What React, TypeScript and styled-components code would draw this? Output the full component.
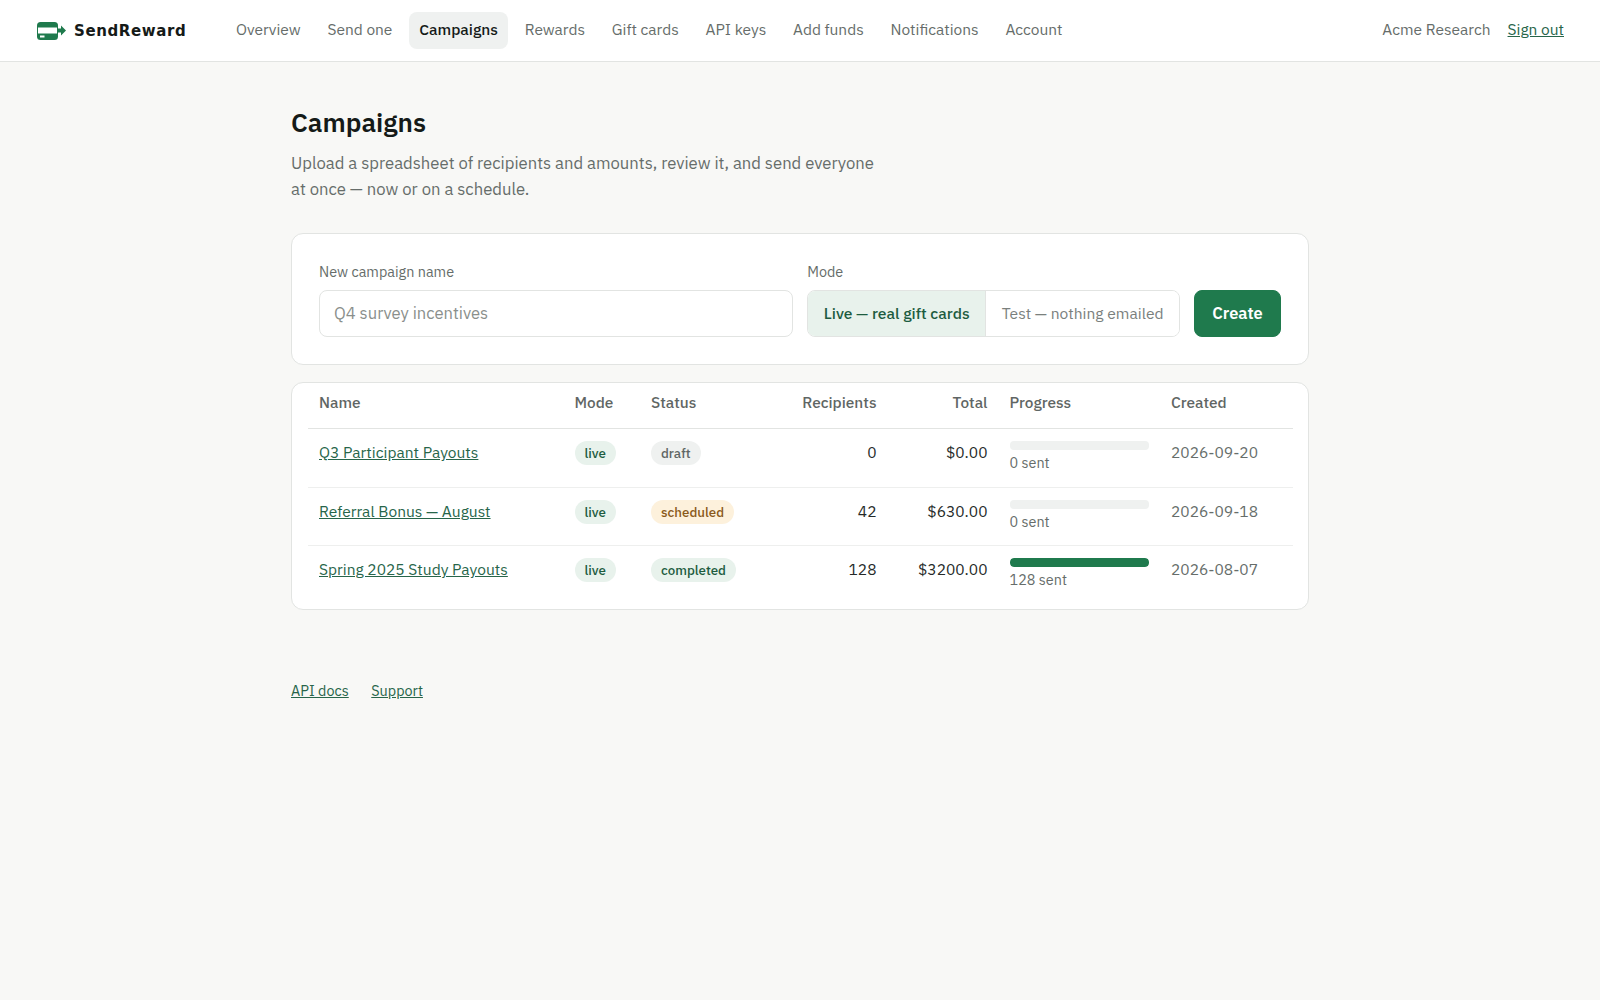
import styled, { createGlobalStyle } from 'styled-components'

const sans = `'IBM Plex Sans', 'Noto Sans', Roboto, sans-serif`

const GlobalStyle = createGlobalStyle`
  * {
    box-sizing: border-box;
  }
  html,
  body {
    margin: 0;
    min-height: 100%;
    background: #f8f8f6;
    color: #151a18;
    font-family: ${sans};
    font-size: 15.5px;
  }
`

const Header = styled.header`
  display: flex;
  align-items: center;
  height: 62px;
  padding: 0 36px;
  background: #ffffff;
  border-bottom: 1px solid #e2e4e2;
`

const Brand = styled.a`
  display: flex;
  align-items: center;
  gap: 8px;
  width: 189.5px;
  color: #151a18;
  font-family: 'DejaVu Sans', sans-serif;
  font-size: 15px;
  font-weight: 700;
  letter-spacing: 0.6px;
`

const NavList = styled.nav`
  display: flex;
  align-items: center;
  gap: 5.75px;
`

const NavItem = styled.a<{ $active?: boolean }>`
  padding: 8px 10.5px 11px;
  border-radius: 8px;
  line-height: 18px;
  font-size: 15.5px;
  font-weight: ${p => (p.$active ? 500 : 400)};
  color: ${p => (p.$active ? '#151a18' : '#666d6a')};
  background: ${p => (p.$active ? '#eff1f0' : 'transparent')};
`

const HeaderRight = styled.div`
  display: flex;
  align-items: center;
  gap: 17px;
  margin-left: auto;
  padding-bottom: 3px;
  color: #666d6a;
`

const GreenLink = styled.a`
  color: #27654a;
  text-decoration: underline;
`

const Main = styled.main`
  width: 1018px;
  margin: 0 auto;
  padding-top: 42px;
`

const Title = styled.h1`
  margin: 0;
  font-size: 26.2px;
  line-height: 36px;
  font-weight: 600;
`

const Lead = styled.p`
  width: 590px;
  margin: 11px 0 31px;
  color: #666d6a;
  font-size: 16.68px;
  line-height: 25.5px;
`

const Card = styled.section`
  background: #ffffff;
  border: 1px solid #e2e4e2;
  border-radius: 12px;
`

const FormCard = styled(Card)`
  display: flex;
  align-items: flex-end;
  gap: 14px;
  padding: 29px 27px 27px;
  margin-bottom: 17px;
`

const Field = styled.div<{ $grow?: boolean }>`
  display: flex;
  flex-direction: column;
  gap: 9px;
  flex: ${p => (p.$grow ? 1 : 'none')};
`

const Label = styled.label`
  color: #666d6a;
  font-size: 14.4px;
  line-height: 18px;
`

const Input = styled.input`
  height: 47px;
  padding: 0 14px 2px;
  border: 1px solid #e2e4e2;
  border-radius: 8px;
  background: #ffffff;
  font-family: ${sans};
  font-size: 16.6px;
  &::placeholder {
    color: #8a8f8c;
  }
`

const Segmented = styled.div`
  display: flex;
  height: 47px;
  border: 1px solid #e2e4e2;
  border-radius: 8px;
  overflow: hidden;
`

const Segment = styled.button<{ $active?: boolean }>`
  padding: 0 15.5px 2px;
  border: 0;
  border-left: ${p => (p.$active ? '0' : '1px solid #e2e4e2')};
  font-family: ${sans};
  font-size: 15.6px;
  font-weight: ${p => (p.$active ? 500 : 400)};
  color: ${p => (p.$active ? '#1d5c3f' : '#7a807d')};
  background: ${p => (p.$active ? '#e8f2ec' : '#ffffff')};
`

const CreateButton = styled.button`
  width: 87px;
  height: 47px;
  padding: 0 0 2px;
  border: 1px solid #1f7a4d;
  border-radius: 8px;
  background: #1f7a4d;
  color: #ffffff;
  font-family: ${sans};
  font-size: 16.4px;
  font-weight: 600;
`

const TableCard = styled(Card)`
  padding: 0 16px 5px;
`

const Table = styled.table`
  width: 100%;
  table-layout: fixed;
  border-collapse: collapse;
`

const HeadCell = styled.th<{ $right?: boolean }>`
  height: 45.5px;
  padding: 0 11px 6.5px;
  border-bottom: 1px solid #e2e4e2;
  color: #5f6664;
  font-size: 15.4px;
  font-weight: 500;
  text-align: ${p => (p.$right ? 'right' : 'left')};
`

const Row = styled.tr`
  & + & td {
    border-top: 1px solid #eeefee;
  }
`

const Cell = styled.td<{ $right?: boolean; $muted?: boolean }>`
  height: 58.5px;
  padding: 12px 11px 0;
  vertical-align: top;
  font-size: 15.55px;
  line-height: 22px;
  text-align: ${p => (p.$right ? 'right' : 'left')};
  color: ${p => (p.$muted ? '#666d6a' : '#252a28')};
`

const tones = {
  green: { bg: '#e8f2ec', fg: '#1d5c3f' },
  gray: { bg: '#eff1f0', fg: '#5f6664' },
  amber: { bg: '#fdf1dc', fg: '#8a5a1a' }
}

const Badge = styled.span<{ $tone: keyof typeof tones }>`
  display: inline-block;
  padding: 0 10px;
  border-radius: 12px;
  font-size: 13.3px;
  line-height: 24px;
  font-weight: 500;
  background: ${p => tones[p.$tone].bg};
  color: ${p => tones[p.$tone].fg};
`

const Track = styled.div`
  height: 9px;
  border-radius: 4px;
  background: #eff1f0;
  overflow: hidden;
`

const Fill = styled.div`
  height: 100%;
  border-radius: 4px;
  background: #1f7a4d;
`

const SentNote = styled.div`
  margin-top: 4px;
  color: #666d6a;
  font-size: 14.4px;
  line-height: 18px;
`

const Footer = styled.footer`
  display: flex;
  gap: 22.5px;
  margin-top: 72px;
  font-size: 14.4px;
  line-height: 18px;
`

const columns = [255.5, 76.5, 149.5, 98, 111, 161.5, 133]

const campaigns = [
  { name: 'Q3 Participant Payouts', status: 'draft', tone: 'gray', recipients: 0, total: '$0.00', sent: 0, created: '2026-09-20' },
  { name: 'Referral Bonus — August', status: 'scheduled', tone: 'amber', recipients: 42, total: '$630.00', sent: 0, created: '2026-09-18' },
  { name: 'Spring 2025 Study Payouts', status: 'completed', tone: 'green', recipients: 128, total: '$3200.00', sent: 128, created: '2026-08-07' }
] as const

const navItems = ['Overview', 'Send one', 'Campaigns', 'Rewards', 'Gift cards', 'API keys', 'Add funds', 'Notifications', 'Account']

const Logo = () => (
  <svg width="30" height="20" viewBox="0 0 30 20" aria-hidden="true">
    <rect x="1" y="1" width="21" height="18" rx="3.500" fill="#1f7a4d" />
    <rect x="2" y="6.500" width="19" height="6" fill="#ffffff" />
    <rect x="4" y="14.500" width="4.500" height="2" fill="#ffffff" />
    <path d="M21 7.500h4V4.500L30 9.500l-5 5v-3h-4z" fill="#1f7a4d" />
  </svg>
)

export default function App() {
  return (
    <>
      <GlobalStyle />
      <Header>
        <Brand>
          <Logo />
          SendReward
        </Brand>
        <NavList>
          {navItems.map(item => (
            <NavItem key={item} $active={item === 'Campaigns'}>
              {item}
            </NavItem>
          ))}
        </NavList>
        <HeaderRight>
          <span>Acme Research</span>
          <GreenLink>Sign out</GreenLink>
        </HeaderRight>
      </Header>
      <Main>
        <Title>Campaigns</Title>
        <Lead>
          Upload a spreadsheet of recipients and amounts, review it, and send everyone at once — now or on a schedule.
        </Lead>
        <FormCard>
          <Field $grow>
            <Label>New campaign name</Label>
            <Input placeholder="Q4 survey incentives" />
          </Field>
          <Field>
            <Label>Mode</Label>
            <Segmented>
              <Segment $active>Live — real gift cards</Segment>
              <Segment>Test — nothing emailed</Segment>
            </Segmented>
          </Field>
          <CreateButton>Create</CreateButton>
        </FormCard>
        <TableCard>
          <Table>
            <colgroup>
              {columns.map((width, i) => (
                <col key={i} width={width} />
              ))}
            </colgroup>
            <thead>
              <tr>
                <HeadCell>Name</HeadCell>
                <HeadCell>Mode</HeadCell>
                <HeadCell>Status</HeadCell>
                <HeadCell $right>Recipients</HeadCell>
                <HeadCell $right>Total</HeadCell>
                <HeadCell>Progress</HeadCell>
                <HeadCell>Created</HeadCell>
              </tr>
            </thead>
            <tbody>
              {campaigns.map(c => (
                <Row key={c.name}>
                  <Cell>
                    <GreenLink>{c.name}</GreenLink>
                  </Cell>
                  <Cell>
                    <Badge $tone="green">live</Badge>
                  </Cell>
                  <Cell>
                    <Badge $tone={c.tone}>{c.status}</Badge>
                  </Cell>
                  <Cell $right>{c.recipients}</Cell>
                  <Cell $right>{c.total}</Cell>
                  <Cell>
                    <Track>{c.sent > 0 && <Fill style={{ width: `${(c.sent / c.recipients) * 100}%` }} />}</Track>
                    <SentNote>{c.sent} sent</SentNote>
                  </Cell>
                  <Cell $muted>{c.created}</Cell>
                </Row>
              ))}
            </tbody>
          </Table>
        </TableCard>
        <Footer>
          <GreenLink>API docs</GreenLink>
          <GreenLink>Support</GreenLink>
        </Footer>
      </Main>
    </>
  )
}
